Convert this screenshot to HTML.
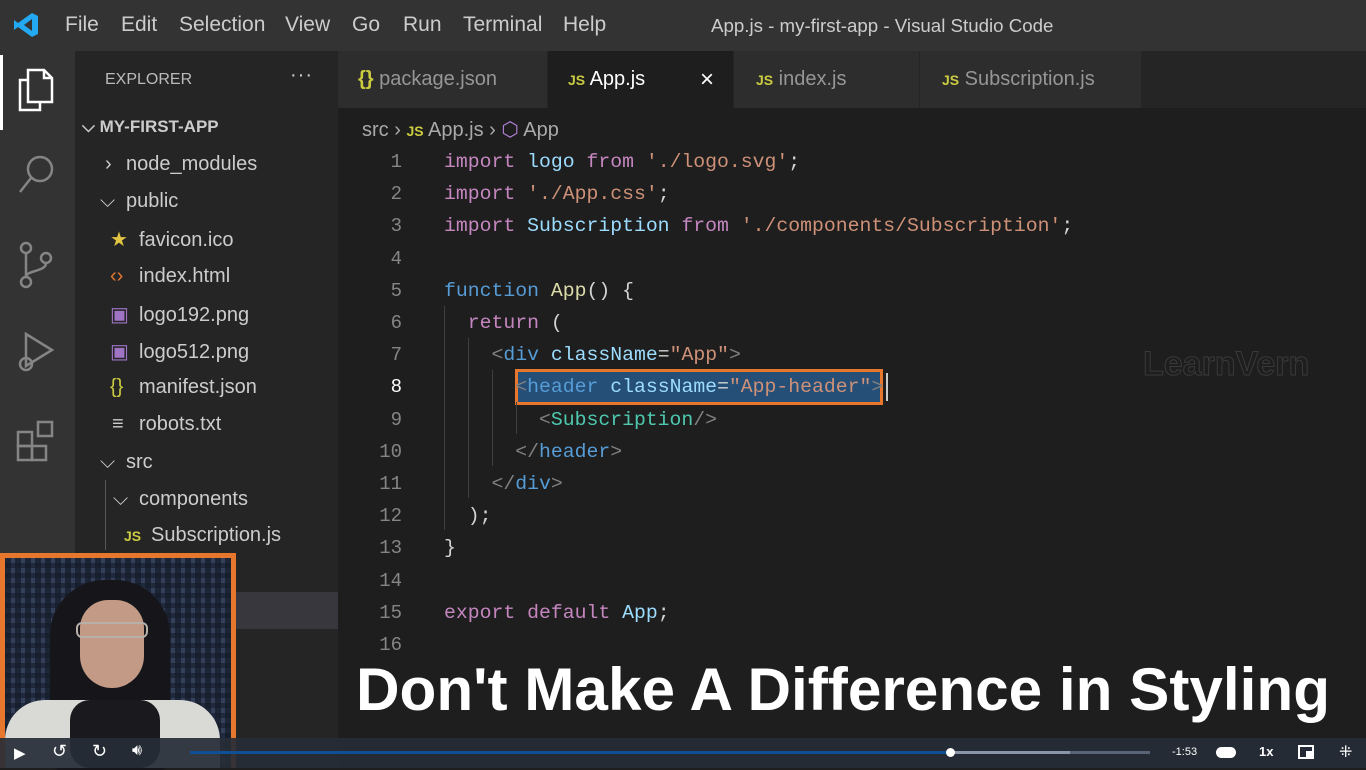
<!DOCTYPE html>
<html><head><meta charset="utf-8"><style>
*{margin:0;padding:0;box-sizing:border-box}
body{width:1366px;height:768px;overflow:hidden;background:#1e1e1e;position:relative;font-family:"Liberation Sans",sans-serif}
.a{position:absolute}
.mono{font-family:"Liberation Mono",monospace;font-size:19.8px;white-space:pre}
.side{color:#cccccc;font-size:20px;white-space:nowrap}
.ln{color:#858585;width:60px;text-align:right;left:342px}
.k{color:#c586c0}.v{color:#9cdcfe}.s{color:#ce9178}.f{color:#dcdcaa}.b{color:#569cd6}.t{color:#4ec9b0}.g{color:#808080}.w{color:#d4d4d4}
.js{color:#cbcb41;font-weight:bold;font-size:14px}
.m{position:absolute;top:13px;color:#cccccc;font-size:21px}
.ic{display:inline-block;width:29px}
</style></head><body>
<div class="a" style="left:0;top:0;width:1366px;height:51px;background:#333333"></div>
<svg class="a" style="left:12px;top:11px" width="28" height="28" viewBox="0 0 28 28"><path d="M20 2 L26 5 V23 L20 26 L6 16 L2 19 V9 L6 12 Z M20 8 L12 14 L20 20 Z" fill="#23a9f2"/></svg>
<span class="m" style="left:65px">File</span><span class="m" style="left:121px">Edit</span><span class="m" style="left:179px">Selection</span><span class="m" style="left:285px">View</span><span class="m" style="left:352px">Go</span><span class="m" style="left:403px">Run</span><span class="m" style="left:463px">Terminal</span><span class="m" style="left:563px">Help</span>
<div class="a" style="left:711px;top:15px;color:#cccccc;font-size:18.7px">App.js - my-first-app - Visual Studio Code</div>
<div class="a" style="left:0;top:51px;width:75px;height:717px;background:#333333"></div>
<div class="a" style="left:0;top:55px;width:3px;height:75px;background:#fff"></div>
<svg class="a" style="left:14px;top:66px" width="44" height="48" viewBox="0 0 44 48" fill="none" stroke="#fff" stroke-width="2.5"><path d="M14 4 H30 L38 12 V36 H14 Z M30 4 V12 H38"/><path d="M14 14 H6 V44 H26 V36"/></svg>
<svg class="a" style="left:16px;top:152px" width="42" height="46" viewBox="0 0 42 46" fill="none" stroke="#858585" stroke-width="2.5"><circle cx="24" cy="17" r="12"/><path d="M15 26 L4 40"/></svg>
<svg class="a" style="left:16px;top:240px" width="40" height="50" viewBox="0 0 40 50" fill="none" stroke="#858585" stroke-width="2.5"><circle cx="10" cy="8" r="5"/><circle cx="10" cy="42" r="5"/><circle cx="30" cy="18" r="5"/><path d="M10 13 V37 M30 23 C30 32 10 30 10 37"/></svg>
<svg class="a" style="left:14px;top:330px" width="44" height="48" viewBox="0 0 44 48" fill="none" stroke="#858585" stroke-width="2.5"><path d="M12 4 L38 20 L12 36 Z"/><circle cx="12" cy="34" r="6"/></svg>
<svg class="a" style="left:14px;top:418px" width="44" height="46" viewBox="0 0 44 46" fill="none" stroke="#858585" stroke-width="2.5"><rect x="4" y="14" width="14" height="14"/><rect x="4" y="28" width="14" height="14"/><rect x="18" y="28" width="14" height="14"/><rect x="24" y="4" width="14" height="14"/></svg>
<div class="a" style="left:75px;top:51px;width:263px;height:717px;background:#252526"></div>
<div class="a" style="left:75px;top:592px;width:263px;height:37px;background:#37373d"></div>
<div class="a" style="left:105px;top:71px;color:#bbbbbb;font-size:16px">EXPLORER</div>
<div class="a" style="left:290px;top:64px;color:#cccccc;font-size:20px;letter-spacing:1px">···</div>
<div class="a side" style="left:82px;top:117px;font-weight:bold;font-size:17px">⌵ MY-FIRST-APP</div>
<div class="a side" style="left:105px;top:153px"><span class="ic" style="width:21px">›</span>node_modules</div>
<div class="a side" style="left:100px;top:190px"><span class="ic" style="width:26px">⌵</span>public</div>
<div class="a side" style="left:110px;top:227px"><span class="ic" style="color:#e2c541">★</span>favicon.ico</div>
<div class="a side" style="left:110px;top:265px"><span class="ic" style="color:#e37933">‹›</span>index.html</div>
<div class="a side" style="left:110px;top:302px"><span class="ic" style="color:#a074c4">▣</span>logo192.png</div>
<div class="a side" style="left:110px;top:339px"><span class="ic" style="color:#a074c4">▣</span>logo512.png</div>
<div class="a side" style="left:110px;top:376px"><span class="ic" style="color:#cbcb41">{}</span>manifest.json</div>
<div class="a side" style="left:112px;top:413px"><span class="ic" style="width:27px">≡</span>robots.txt</div>
<div class="a side" style="left:100px;top:451px"><span class="ic" style="width:26px">⌵</span>src</div>
<div class="a side" style="left:113px;top:488px"><span class="ic" style="width:26px">⌵</span>components</div>
<div class="a side" style="left:124px;top:524px"><span class="ic" style="width:27px"><span class="js">JS</span></span>Subscription.js</div>
<div class="a" style="left:105px;top:480px;width:1px;height:70px;background:#585858"></div>
<div class="a" style="left:338px;top:51px;width:1028px;height:57px;background:#252526"></div>
<div class="a" style="left:338px;top:51px;width:209px;height:57px;background:#2d2d2d"></div>
<div class="a" style="left:548px;top:51px;width:185px;height:57px;background:#1e1e1e"></div>
<div class="a" style="left:734px;top:51px;width:185px;height:57px;background:#2d2d2d"></div>
<div class="a" style="left:920px;top:51px;width:221px;height:57px;background:#2d2d2d"></div>
<div class="a" style="left:358px;top:68px;font-size:20px;color:#969696"><span style="color:#cbcb41;font-weight:bold">{}</span> package.json</div>
<div class="a" style="left:568px;top:68px;font-size:20px;color:#ffffff"><span class="js">JS</span> App.js</div>
<div class="a" style="left:700px;top:66px;font-size:24px;color:#fff">×</div>
<div class="a" style="left:756px;top:68px;font-size:20px;color:#969696"><span class="js">JS</span> index.js</div>
<div class="a" style="left:942px;top:68px;font-size:20px;color:#969696"><span class="js">JS</span> Subscription.js</div>
<div class="a" style="left:362px;top:117px;font-size:20px;color:#a9a9a9;white-space:nowrap">src › <span class="js">JS</span> App.js › <span style="color:#b180d7">⬡</span> App</div>
<div class="a mono ln" style="top:146px;line-height:32.2px;font-size:19px">1
2
3
4
5
6
7
<span style="color:#fff">8</span>
9
10
11
12
13
14
15
16</div>
<div class="a" style="left:515px;top:369px;width:368px;height:36px;border:3px solid #e8772e;background:#264f78"></div>
<div class="a" style="left:886px;top:373px;width:2px;height:28px;background:#ccc"></div>
<div class="a" style="left:444px;top:306px;width:1px;height:224px;background:#404040"></div>
<div class="a" style="left:468px;top:338px;width:1px;height:160px;background:#404040"></div>
<div class="a" style="left:492px;top:370px;width:1px;height:96px;background:#404040"></div>
<div class="a" style="left:516px;top:402px;width:1px;height:32px;background:#404040"></div>
<div class="a mono" style="left:444px;top:146px;line-height:32.2px;color:#d4d4d4"><span class="k">import</span> <span class="v">logo</span> <span class="k">from</span> <span class="s">'./logo.svg'</span>;
<span class="k">import</span> <span class="s">'./App.css'</span>;
<span class="k">import</span> <span class="v">Subscription</span> <span class="k">from</span> <span class="s">'./components/Subscription'</span>;

<span class="b">function</span> <span class="f">App</span>() {
  <span class="k">return</span> (
    <span class="g">&lt;</span><span class="b">div</span> <span class="v">className</span>=<span class="s">"App"</span><span class="g">&gt;</span>
      <span class="g">&lt;</span><span class="b">header</span> <span class="v">className</span>=<span class="s">"App-header"</span><span class="g">&gt;</span>
        <span class="g">&lt;</span><span class="t">Subscription</span><span class="g">/&gt;</span>
      <span class="g">&lt;/</span><span class="b">header</span><span class="g">&gt;</span>
    <span class="g">&lt;/</span><span class="b">div</span><span class="g">&gt;</span>
  );
}

<span class="k">export</span> <span class="k">default</span> <span class="v">App</span>;
</div>
<div class="a" style="left:1143px;top:345px;font-size:34px;font-weight:bold;color:transparent;-webkit-text-stroke:1px #3a3a3a">LearnVern</div>
<svg class="a" style="left:0;top:640px" width="1366" height="100"><text x="356" y="70" textLength="974" lengthAdjust="spacingAndGlyphs" font-family="Liberation Sans" font-weight="bold" font-size="60" fill="#fff">Don't Make A Difference in Styling</text></svg>
<div class="a" style="left:0;top:553px;width:236px;height:215px;background:#e8772e"></div>
<div class="a" style="left:5px;top:558px;width:226px;height:210px;background:repeating-linear-gradient(90deg,#1c2536 0 6px,#34405a 6px 10px),#1c2536"></div>
<div class="a" style="left:5px;top:558px;width:226px;height:210px;background:repeating-linear-gradient(0deg,rgba(20,26,40,.6) 0 5px,transparent 5px 10px)"></div>
<div class="a" style="left:50px;top:580px;width:120px;height:190px;background:#16161a;border-radius:55px 55px 10px 10px"></div>
<div class="a" style="left:5px;top:700px;width:215px;height:68px;background:#d9d9d6;border-radius:40px 40px 0 0"></div>
<div class="a" style="left:70px;top:700px;width:90px;height:68px;background:#1a1a1e;border-radius:20px"></div>
<div class="a" style="left:80px;top:600px;width:64px;height:88px;background:#c39a86;border-radius:30px 30px 34px 34px"></div>
<div class="a" style="left:76px;top:622px;width:72px;height:16px;border:2px solid #b8b0a8;border-radius:6px"></div>
<div class="a" style="left:0;top:738px;width:1366px;height:30px;background:rgba(38,44,54,.92)"></div>
<div class="a" style="left:190px;top:751px;width:960px;height:3px;background:#596577"></div>
<div class="a" style="left:190px;top:751px;width:760px;height:3px;background:#0f4f93"></div>
<div class="a" style="left:950px;top:751px;width:120px;height:3px;background:#8a96a8"></div>
<div class="a" style="left:946px;top:748px;width:9px;height:9px;border-radius:50%;background:#fff"></div>
<div class="a" style="left:14px;top:744px;color:#fff;font-size:15px">▶</div>
<div class="a" style="left:52px;top:741px;color:#fff;font-size:18px">↺</div>
<div class="a" style="left:92px;top:741px;color:#fff;font-size:18px">↻</div>
<div class="a" style="left:132px;top:742px;color:#fff;font-size:16px">🔊︎</div>
<div class="a" style="left:1172px;top:746px;color:#fff;font-size:11px">-1:53</div>
<div class="a" style="left:1216px;top:747px;width:20px;height:11px;border-radius:6px;background:#fff"></div>
<div class="a" style="left:1259px;top:744px;color:#fff;font-size:13px;font-weight:bold">1x</div>
<div class="a" style="left:1298px;top:745px;width:16px;height:14px;border:2px solid #fff"></div>
<div class="a" style="left:1306px;top:751px;width:6px;height:6px;background:#fff"></div>
<div class="a" style="left:1339px;top:742px;color:#fff;font-size:16px">⁜</div>
</body></html>
